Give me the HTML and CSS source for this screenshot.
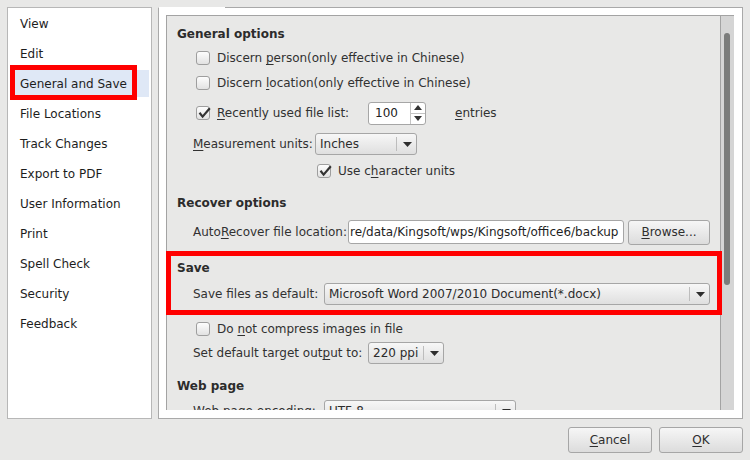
FILE: index.html
```html
<!DOCTYPE html>
<html>
<head>
<meta charset="utf-8">
<title>Options</title>
<link rel="stylesheet" href="styles.css">
</head>
<body>
<div class="dialog">
  <div class="main">
    <ul class="nav">
      <li>View</li>
      <li>Edit</li>
      <li class="active"><span class="mark nav-mark"></span>General and Save</li>
      <li>File Locations</li>
      <li>Track Changes</li>
      <li>Export to PDF</li>
      <li>User Information</li>
      <li>Print</li>
      <li>Spell Check</li>
      <li>Security</li>
      <li>Feedback</li>
    </ul>

    <div class="panel">
      <div class="frame">
        <div class="viewport">
          <h3 class="heading">General options</h3>
          <div class="row in-check mt2">
            <span class="cb"></span><span>Discern <u>p</u>erson(only effective in Chinese)</span>
          </div>
          <div class="row in-check mt3">
            <span class="cb"></span><span>Discern <u>l</u>ocation(only effective in Chinese)</span>
          </div>
          <div class="row in-check mt8">
            <span class="cb checked"><svg viewBox="0 0 14 14" width="14" height="14"><path d="M2.5 6.8 L5.6 10.6 L12.8 2.2" fill="none" stroke="#333" stroke-width="2.2"/></svg></span>
            <span class="lbl w-recent"><u>R</u>ecently used file list:</span>
            <span class="spin">
              <span class="spin-val">100</span>
              <span class="spin-btns">
                <span class="spin-up"><svg viewBox="0 0 8 5" width="8" height="5"><path d="M0 5 L4 0 L8 5Z" fill="#333"/></svg></span>
                <span class="spin-down"><svg viewBox="0 0 8 5" width="8" height="5"><path d="M0 0 L4 5 L8 0Z" fill="#333"/></svg></span>
              </span>
            </span>
            <span class="entries"><u>e</u>ntries</span>
          </div>
          <div class="row in-label mt9">
            <span class="lbl w-measure"><u>M</u>easurement units:</span>
            <span class="combo w-inches"><span class="combo-text">Inches</span><span class="combo-arrow"><svg viewBox="0 0 9 5" width="9" height="5"><path d="M0 0 L4.5 5 L9 0Z" fill="#2e2e2e"/></svg></span></span>
          </div>
          <div class="row in-sub mt5">
            <span class="cb checked"><svg viewBox="0 0 14 14" width="14" height="14"><path d="M2.5 6.8 L5.6 10.6 L12.8 2.2" fill="none" stroke="#333" stroke-width="2.2"/></svg></span>
            <span>Use c<u>h</u>aracter units</span>
          </div>

          <h3 class="heading mt10">Recover options</h3>
          <div class="row in-label mt7">
            <span class="lbl w-auto">Auto<u>R</u>ecover file location:</span>
            <span class="input">re/data/Kingsoft/wps/Kingsoft/office6/backup</span>
            <span class="btn browse"><span><u>B</u>rowse...</span></span>
          </div>

          <h3 class="heading mt14">Save</h3>
          <div class="row in-label mt4">
            <span class="lbl w-save">Save files as default:</span>
            <span class="combo w-format"><span class="combo-text">Microsoft Word 2007/2010 Document(*.docx)</span><span class="combo-arrow"><svg viewBox="0 0 9 5" width="9" height="5"><path d="M0 0 L4.5 5 L9 0Z" fill="#2e2e2e"/></svg></span></span>
          </div>
          <div class="row in-check mt13">
            <span class="cb"></span><span>Do <u>n</u>ot compress images in file</span>
          </div>
          <div class="row in-label mt2">
            <span class="lbl w-target">Set default target out<u>p</u>ut to:</span>
            <span class="combo w-ppi"><span class="combo-text">220 ppi</span><span class="combo-arrow"><svg viewBox="0 0 9 5" width="9" height="5"><path d="M0 0 L4.5 5 L9 0Z" fill="#2e2e2e"/></svg></span></span>
          </div>

          <h3 class="heading mt11">Web page</h3>
          <div class="row in-label mt3">
            <span class="lbl w-save">Web page encoding:</span>
            <span class="combo w-enc"><span class="combo-text">UTF-8</span><span class="combo-arrow"><svg viewBox="0 0 9 5" width="9" height="5"><path d="M0 0 L4.5 5 L9 0Z" fill="#2e2e2e"/></svg></span></span>
          </div>
        </div>
        <div class="scrollbar"><div class="handle"></div></div>
      </div>
      <div class="mark save-mark"></div>
    </div>
  </div>

  <div class="footer">
    <button class="btn action"><span><u>C</u>ancel</span></button>
    <button class="btn action"><span><u>O</u>K</span></button>
  </div>
</div>
</body>
</html>
```

FILE: styles.css
```css
* { box-sizing: border-box; }

html, body { margin: 0; padding: 0; }

body {
  width: 750px;
  height: 460px;
  overflow: hidden;
  background: #e8e8e7;
  font-family: "DejaVu Sans", "Liberation Sans", sans-serif;
  font-size: 12px;
  color: #313131;
}

u { text-decoration: underline; text-underline-offset: 2px; }

.dialog {
  height: 460px;
  padding: 7px 7px 0 7px;
  display: flex;
  flex-direction: column;
}

.main {
  display: grid;
  grid-template-columns: 145px 585px;
  grid-template-rows: 412px;
  column-gap: 6px;
  height: 412px;
  flex-shrink: 0;
}

/* ---------- sidebar ---------- */
.nav {
  list-style: none;
  margin: 0;
  padding: 2px;
  background: #fff;
  border: 1px solid #b7b7b7;
  display: flex;
  flex-direction: column;
  gap: 3px;
  min-height: 0;
}

.nav li {
  position: relative;
  height: 27px;
  padding-left: 10px;
  display: flex;
  align-items: center;
  color: #1d1d1d;
  white-space: nowrap;
}

.nav li.active { background: #dfe8f6; }

.mark {
  position: absolute;
  border: 5px solid #ff0000;
  pointer-events: none;
}

.nav-mark {
  left: 0;
  top: -5px;
  width: 127px;
  height: 35px;
}

/* ---------- panel ---------- */
.panel {
  position: relative;
  min-height: 0;
  background: #fff;
  border: 1px solid #a9a9a9;
  border-top-color: #fff;
  padding: 7px 8px 8px 7px;
}

.panel::before {
  content: "";
  position: absolute;
  top: -1px;
  left: 66px;
  right: -1px;
  height: 1px;
  background: #a9a9a9;
}

.save-mark {
  left: 7px;
  top: 243px;
  width: 556px;
  height: 64px;
}

.frame {
  display: flex;
  height: 395px;
  border-top: 1px solid #a3a3a3;
  border-left: 1px solid #a3a3a3;
  background: #e8e8e7;
}

.viewport {
  flex: 1;
  min-height: 0;
  overflow: hidden;
  padding: 7px 0 0 10px;
  display: flex;
  flex-direction: column;
}

.scrollbar {
  width: 14px;
  border-left: 1px solid #a3a3a3;
  background: #d5d5d5;
  padding: 17px 0 0 3px;
}

.handle {
  width: 6px;
  height: 252px;
  background: #7b7c7b;
  border-radius: 3px;
}

/* ---------- rows ---------- */
.heading {
  margin: 0;
  height: 22px;
  flex-shrink: 0;
  display: flex;
  align-items: center;
  font-size: 12px;
  font-weight: bold;
  color: #2c2c2c;
}

.row {
  height: 22px;
  flex-shrink: 0;
  display: flex;
  align-items: center;
  white-space: nowrap;
}

.in-check { padding-left: 19px; }
.in-label { padding-left: 16px; }
.in-sub { padding-left: 140px; }

.mt2 { margin-top: 2px; }
.mt3 { margin-top: 3px; }
.mt4 { margin-top: 4px; }
.mt5 { margin-top: 5px; }
.mt7 { margin-top: 7px; }
.mt8 { margin-top: 8px; }
.mt9 { margin-top: 9px; }
.mt10 { margin-top: 10px; }
.mt11 { margin-top: 11px; }
.mt13 { margin-top: 13px; }
.mt14 { margin-top: 14px; }

.lbl { flex-shrink: 0; }
.w-recent { width: 151px; }
.w-measure { width: 122px; }
.w-auto { width: 155px; }
.w-save { width: 131px; }
.w-target { width: 175px; }

/* checkbox */
.cb {
  width: 14px;
  height: 14px;
  margin-right: 7px;
  flex-shrink: 0;
  border: 1px solid #9e9e9e;
  border-radius: 3px;
  background: linear-gradient(#fdfdfd, #e2e2e2);
  position: relative;
}

.cb svg {
  position: absolute;
  left: 0;
  top: -1px;
  overflow: visible;
}

/* spin box */
.spin {
  width: 58px;
  height: 23px;
  display: flex;
  background: #fff;
  border: 1px solid #a6a6a6;
  border-radius: 3px;
}

.spin-val {
  flex: 1;
  padding-left: 6px;
  display: flex;
  align-items: center;
  color: #222;
}

.spin-btns {
  width: 15px;
  border-left: 1px solid #c4c4c4;
  display: flex;
  flex-direction: column;
}

.spin-up, .spin-down {
  flex: 1;
  display: flex;
  align-items: center;
  justify-content: center;
}

.spin-up { border-bottom: 1px solid #c4c4c4; }
.spin-up svg, .spin-down svg { display: block; }

.entries { margin-left: 29px; }

/* combo box */
.combo {
  height: 22px;
  display: flex;
  align-items: center;
  border: 1px solid #a6a6a6;
  border-radius: 3px;
  background: linear-gradient(#f7f7f7, #dfdfdf);
  flex-shrink: 0;
}

.combo-text {
  flex: 1;
  padding-left: 4px;
  overflow: hidden;
  color: #2c2c2c;
}

.combo-arrow {
  width: 20px;
  height: 14px;
  border-left: 1px solid #bdbdbd;
  display: flex;
  align-items: center;
  justify-content: center;
  padding-left: 1px;
}

.combo-arrow svg { display: block; }

.w-inches { width: 102px; }
.w-format { width: 386px; }
.w-ppi { width: 76px; }
.w-enc { width: 192px; }

/* line edit */
.input {
  width: 276px;
  height: 24px;
  display: flex;
  align-items: center;
  padding-left: 1px;
  overflow: hidden;
  background: #fff;
  border: 1px solid #a6a6a6;
  border-radius: 3px;
  color: #1f1f1f;
  flex-shrink: 0;
}

/* buttons */
.btn {
  display: flex;
  align-items: center;
  justify-content: center;
  border: 1px solid #a6a6a6;
  border-radius: 3px;
  background: linear-gradient(#f6f6f6, #dcdcdc);
  font-family: "DejaVu Sans", "Liberation Sans", sans-serif;
  font-size: 12px;
  color: #2e2e2e;
  padding: 0;
  flex-shrink: 0;
}

.browse {
  width: 82px;
  height: 25px;
  margin-left: 4px;
}

.footer {
  display: flex;
  justify-content: flex-end;
  gap: 7px;
  padding-top: 8px;
}

.action {
  width: 84px;
  height: 26px;
}
```
